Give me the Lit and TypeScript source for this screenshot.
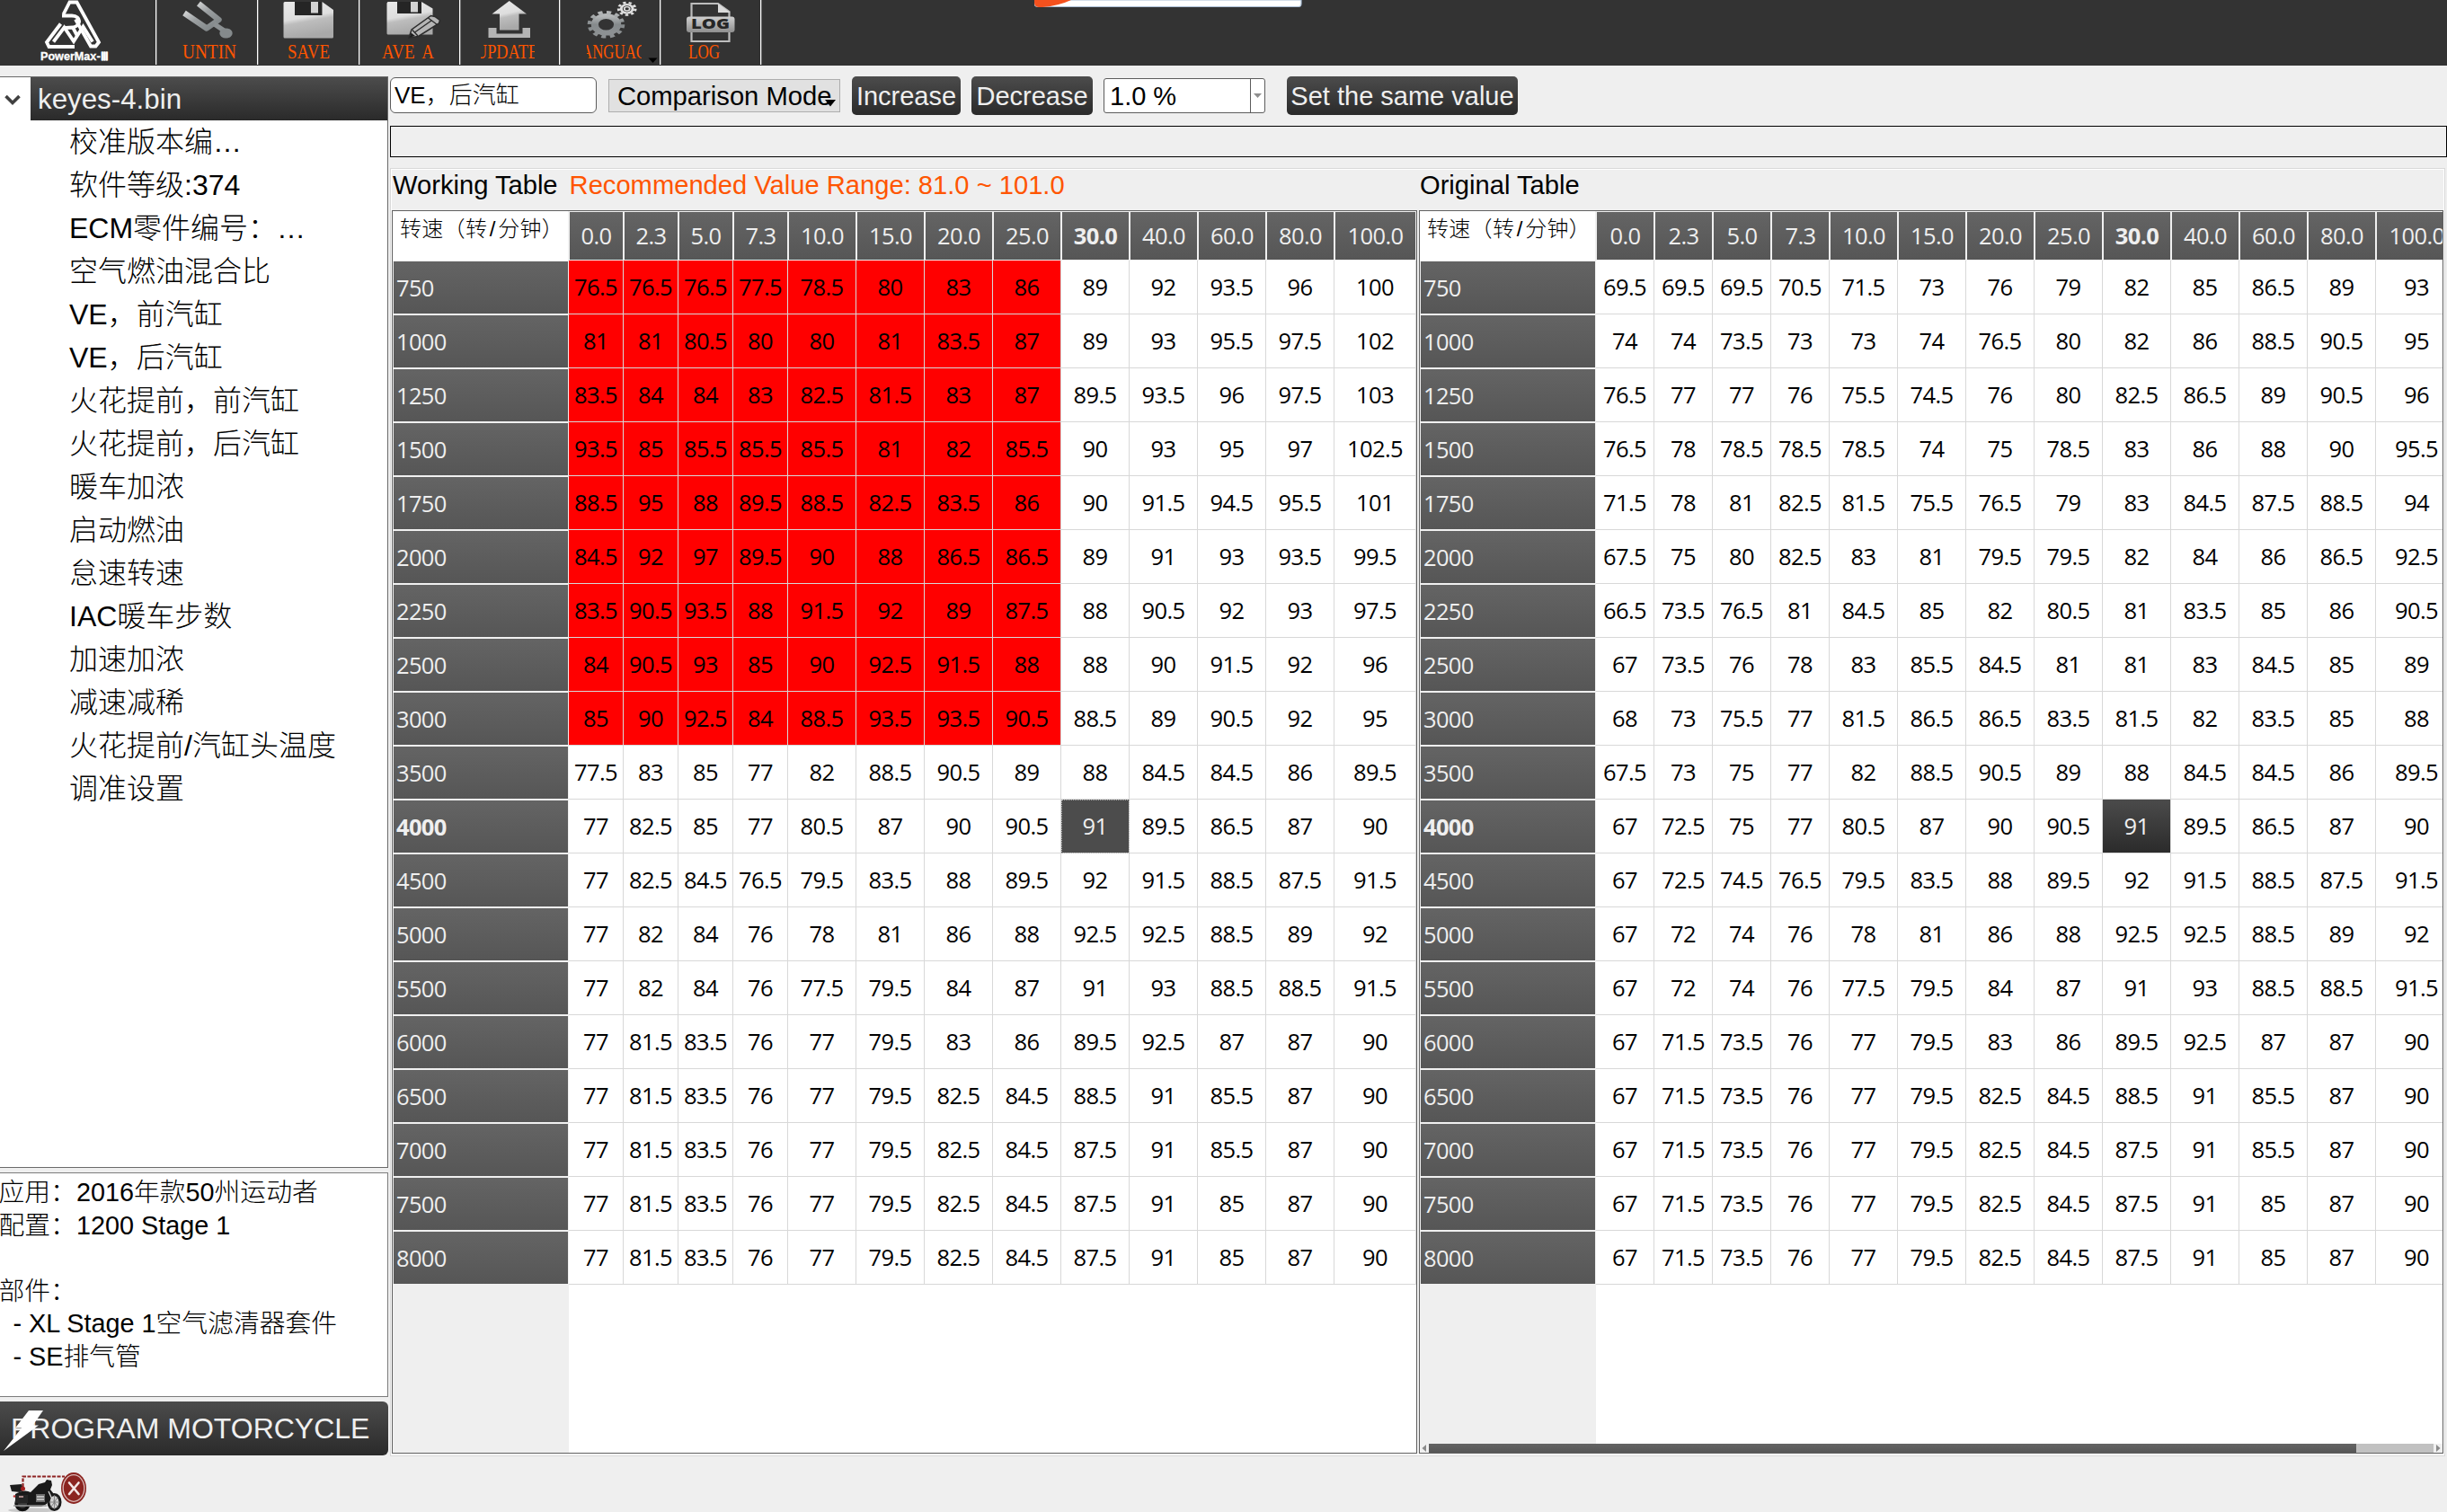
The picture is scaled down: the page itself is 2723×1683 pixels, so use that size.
import { LitElement, html, svg, css } from "lit";
import { customElement, property } from "lit/decorators.js";
import { classMap } from "lit/directives/class-map.js";

const LOADS = ["0.0", "2.3", "5.0", "7.3", "10.0", "15.0", "20.0", "25.0", "30.0", "40.0", "60.0", "80.0", "100.0"];
const SPEEDS = [750, 1000, 1250, 1500, 1750, 2000, 2250, 2500, 3000, 3500, 4000, 4500, 5000, 5500, 6000, 6500, 7000, 7500, 8000];

const parse = (text: string): string[][] =>
  text.trim().split("\n").map((line) => line.trim().split(/\s+/));

const WORKING = parse(`
76.5 76.5 76.5 77.5 78.5 80 83 86 89 92 93.5 96 100
81 81 80.5 80 80 81 83.5 87 89 93 95.5 97.5 102
83.5 84 84 83 82.5 81.5 83 87 89.5 93.5 96 97.5 103
93.5 85 85.5 85.5 85.5 81 82 85.5 90 93 95 97 102.5
88.5 95 88 89.5 88.5 82.5 83.5 86 90 91.5 94.5 95.5 101
84.5 92 97 89.5 90 88 86.5 86.5 89 91 93 93.5 99.5
83.5 90.5 93.5 88 91.5 92 89 87.5 88 90.5 92 93 97.5
84 90.5 93 85 90 92.5 91.5 88 88 90 91.5 92 96
85 90 92.5 84 88.5 93.5 93.5 90.5 88.5 89 90.5 92 95
77.5 83 85 77 82 88.5 90.5 89 88 84.5 84.5 86 89.5
77 82.5 85 77 80.5 87 90 90.5 91 89.5 86.5 87 90
77 82.5 84.5 76.5 79.5 83.5 88 89.5 92 91.5 88.5 87.5 91.5
77 82 84 76 78 81 86 88 92.5 92.5 88.5 89 92
77 82 84 76 77.5 79.5 84 87 91 93 88.5 88.5 91.5
77 81.5 83.5 76 77 79.5 83 86 89.5 92.5 87 87 90
77 81.5 83.5 76 77 79.5 82.5 84.5 88.5 91 85.5 87 90
77 81.5 83.5 76 77 79.5 82.5 84.5 87.5 91 85.5 87 90
77 81.5 83.5 76 77 79.5 82.5 84.5 87.5 91 85 87 90
77 81.5 83.5 76 77 79.5 82.5 84.5 87.5 91 85 87 90`);

const ORIGINAL = parse(`
69.5 69.5 69.5 70.5 71.5 73 76 79 82 85 86.5 89 93
74 74 73.5 73 73 74 76.5 80 82 86 88.5 90.5 95
76.5 77 77 76 75.5 74.5 76 80 82.5 86.5 89 90.5 96
76.5 78 78.5 78.5 78.5 74 75 78.5 83 86 88 90 95.5
71.5 78 81 82.5 81.5 75.5 76.5 79 83 84.5 87.5 88.5 94
67.5 75 80 82.5 83 81 79.5 79.5 82 84 86 86.5 92.5
66.5 73.5 76.5 81 84.5 85 82 80.5 81 83.5 85 86 90.5
67 73.5 76 78 83 85.5 84.5 81 81 83 84.5 85 89
68 73 75.5 77 81.5 86.5 86.5 83.5 81.5 82 83.5 85 88
67.5 73 75 77 82 88.5 90.5 89 88 84.5 84.5 86 89.5
67 72.5 75 77 80.5 87 90 90.5 91 89.5 86.5 87 90
67 72.5 74.5 76.5 79.5 83.5 88 89.5 92 91.5 88.5 87.5 91.5
67 72 74 76 78 81 86 88 92.5 92.5 88.5 89 92
67 72 74 76 77.5 79.5 84 87 91 93 88.5 88.5 91.5
67 71.5 73.5 76 77 79.5 83 86 89.5 92.5 87 87 90
67 71.5 73.5 76 77 79.5 82.5 84.5 88.5 91 85.5 87 90
67 71.5 73.5 76 77 79.5 82.5 84.5 87.5 91 85.5 87 90
67 71.5 73.5 76 77 79.5 82.5 84.5 87.5 91 85 87 90
67 71.5 73.5 76 77 79.5 82.5 84.5 87.5 91 85 87 90`);

const TREE = [
  "校准版本编…", "软件等级:374", "ECM零件编号：…", "空气燃油混合比", "VE，前汽缸", "VE，后汽缸",
  "火花提前，前汽缸", "火花提前，后汽缸", "暖车加浓", "启动燃油", "怠速转速", "IAC暖车步数",
  "加速加浓", "减速减稀", "火花提前/汽缸头温度", "调准设置",
];

@customElement("ve-table")
class VeTable extends LitElement {
  @property({ attribute: false }) rows: string[][] = [];
  @property({ type: Number }) narrow = 61;
  @property({ type: Boolean }) marked = false;
  @property({ type: Boolean }) scroller = false;

  static styles = css`
    :host { display: flex; flex-direction: column; box-sizing: border-box; height: 1384px; border: 1px solid #606060;
      background: #fff; overflow: hidden; font: 25.5px/1 "Open Sans", "Noto Sans", sans-serif; letter-spacing: -0.65px; }
    .grid { flex: 1; min-height: 0; display: grid; align-content: start; overflow: hidden; position: relative;
      background: linear-gradient(#efefef, #efefef) 0 0 / 196px 100% no-repeat; }
    .corner { box-sizing: border-box; background: #fff; border-right: 1px solid #efefef; padding: 7px 0 0 8px;
      font: 300 24px/26px "Liberation Sans", "Noto Sans CJK SC", sans-serif; letter-spacing: 0.3px; white-space: nowrap;
      text-spacing-trim: space-all; }
    .slash { display: inline-block; width: 12px; text-align: center; }
    .head, .side { box-sizing: border-box; border: 1px solid #f0f0f0; color: #efefef; background: linear-gradient(#646464, #565656) padding-box; }
    .head { display: flex; align-items: center; justify-content: center; }
    .side { display: flex; align-items: center; padding: 2px 0 0 3px; }
    .cell { box-sizing: border-box; display: flex; align-items: center; justify-content: center; color: #000;
      border-right: 1px solid #d8d8d8; border-bottom: 1px solid #d8d8d8; }
    .red { background: #f00; }
    .current { font-weight: 700; }
    .picked { color: #efefef; background: linear-gradient(#4b4b4b, #2b2b2b); }
    .picked.soft { background: #4c4c4c; outline: 1px dotted #b4b4b4; outline-offset: -1px; }
    .bar { flex: none; height: 10px; display: flex; align-items: stretch; background: #f0f0f0; }
    .bar svg { width: 10px; height: 10px; }
    .track { flex: 1; background: #c1c1c1; }
    .thumb { width: 1032px; height: 10px; background: linear-gradient(#646464, #565656); }
  `;

  render() {
    const n = this.narrow;
    const columns = `196px repeat(4, ${n}px) repeat(8, 76px) 91px`;
    return html`
      <div class="grid" style="grid-template-columns:${columns};grid-template-rows:55px repeat(19, 60px)">
        <div class="corner">转速（转<span class="slash">/</span>分钟）</div>
        ${LOADS.map((l) => html`<div class=${classMap({ head: true, current: l === "30.0" })}>${l}</div>`)}
        ${this.rows.map((row, r) => html`
          <div class=${classMap({ side: true, current: r === 10 })}>${SPEEDS[r]}</div>
          ${row.map((v, c) => html`<div class=${classMap({
            cell: true,
            red: this.marked && r < 9 && c < 8,
            picked: r === 10 && c === 8,
            soft: this.marked,
          })}>${v}</div>`)}`)}
      </div>
      ${this.scroller ? html`<div class="bar">
        <svg viewBox="0 0 10 10"><path d="M7 1v8L2.500 5z" fill="#8a8a8a"/></svg>
        <div class="track"><div class="thumb"></div></div>
        <svg viewBox="0 0 10 10"><path d="M3 1v8L7.500 5z" fill="#8a8a8a"/></svg>
      </div>` : ""}`;
  }
}

const tools = [
  { x: 173, w: 113, text: "UNTIN", tx: 203, len: 60, cx: 200, cw: 68, icon: svg`
      <path d="M221 4 243.500 22 230 31.500 205 14.500" fill="none" stroke="url(#m)" stroke-width="6.400" stroke-linejoin="round"/>
      <path d="M238 26.500 250 34.500" stroke="#8b9092" stroke-width="5.500"/>
      <ellipse cx="251.500" cy="37" rx="7.200" ry="5.500" fill="#858a8c"/>` },
  { x: 286, w: 113, text: "SAVE", tx: 320, len: 47, cx: 310, cw: 70, icon: svg`
      <path d="M317 2H328V17H358.500V2L371 11V41a1.500 1.500 0 0 1-1.500 1.500H317a1.500 1.500 0 0 1-1.500-1.500V3.500A1.500 1.500 0 0 1 317 2z" fill="url(#s)"/>
      <path d="M328 2h30v15h-30z" fill="#252525"/><path d="M346 2h8v12.500h-8z" fill="#d2d2d2"/>` },
  { x: 399, w: 112, text: "AVE A", tx: 425, len: 58, cx: 420, cw: 70, icon: svg`
      <path d="M431.500 2H442V15H469V2L481.500 9.500V38.500H431.500a1.500 1.500 0 0 1-1-1.500V3.500z" fill="url(#s)"/>
      <path d="M442 2h27v13h-27z" fill="#252525"/><path d="M457 2h8v11.500h-8z" fill="#d2d2d2"/>
      <path d="M455 42 458 33 479.500 17.500 484 18.500 489.500 22.500 488.500 26 465.500 40.500z" fill="#b5b5b5" stroke="#2c2c2c" stroke-width="1.500"/>
      <path d="M459 33.500 465 40M476.500 20 486.500 27.500M461.500 36 480 23" fill="none" stroke="#2c2c2c" stroke-width="1.400"/>
      <path d="M455.500 41.700 457.500 36.500 462 40z" fill="#1d1d1d"/>` },
  { x: 511, w: 111, text: "UPDATE", tx: 529, len: 70, cx: 535, cw: 60, icon: svg`
      <path d="M543.500 31H552.500V37.500H581.500V31H590V42H543.500z" fill="#b4b4b4"/>
      <path d="M566.700 1 586 15.500H577.500V33.500H556V15.500H547.500z" fill="url(#s)"/>` },
  { x: 622, w: 112, text: "ANGUAG", tx: 647, len: 73, cx: 653, cw: 61, icon: svg`
      <g transform="translate(674.500 27.300) scale(1.360 1)" fill="none" stroke="url(#g)">
        <circle r="9.300" stroke-width="6"/><circle r="13.400" stroke-width="3.800" stroke-dasharray="3.700 3.316"/></g>
      <g transform="translate(697.700 9.800) scale(1.360 1)" fill="none" stroke="#e0e0e0">
        <circle r="4.700" stroke-width="2.200"/><circle r="6.800" stroke-width="2.400" stroke-dasharray="2.500 2.247"/>
        <circle r="2.200" stroke-width="1.300"/></g>
      <path d="M721.500 64.500h10l-5 5.500z" fill="#000"/>` },
  { x: 734, w: 112, text: "LOG", tx: 766, len: 35, cx: 760, cw: 50, icon: svg`
      <path d="M769.500 46V4H799L811.500 13V46z" fill="none" stroke="#bdbdbd" stroke-width="2.200"/>
      <path d="M799 4V14H812.500z" fill="#dadada"/>
      <rect x="764" y="18.500" width="53.500" height="17.500" rx="3" fill="url(#b)"/>
      <text x="769" y="32.300" textLength="43" lengthAdjust="spacingAndGlyphs" class="logword">LOG</text>` },
];

const defs = svg`<defs>
  <linearGradient id="m" x1="0" y1="0" x2="1" y2="1"><stop offset="0" stop-color="#f0f0f0"/><stop offset=".5" stop-color="#9a9ea0"/><stop offset="1" stop-color="#7c8284"/></linearGradient>
  <linearGradient id="s" x1="0" y1="0" x2=".25" y2="1"><stop offset="0" stop-color="#e9e9e9"/><stop offset=".5" stop-color="#dedede"/><stop offset=".62" stop-color="#bdbdbd"/><stop offset="1" stop-color="#a9a9a9"/></linearGradient>
  <linearGradient id="g" x1="0" y1="0" x2="0" y2="1"><stop offset="0" stop-color="#b4b7b8"/><stop offset=".5" stop-color="#858a8c"/><stop offset="1" stop-color="#8d9193"/></linearGradient>
  <linearGradient id="b" x1="0" y1="0" x2="0" y2="1"><stop offset="0" stop-color="#d0d0d0"/><stop offset="1" stop-color="#8e8e8e"/></linearGradient>
</defs>`;

@customElement("app-root")
class AppRoot extends LitElement {
  static styles = css`
    :host { display: flex; flex-direction: column; width: 2723px; height: 1683px; overflow: hidden; background: #efefef; color: #000;
      font: 29px/36px "Liberation Sans", "Noto Sans CJK SC", sans-serif; position: relative; text-spacing-trim: space-all; }
    .toolbar { flex: none; height: 73px; background: #333; display: flex; }
    .toolbar > svg { display: block; height: 73px; flex: none; }
    .edge { fill: #fff; } .shade { fill: #6c6c6c; }
    .tooltext { fill: #ff5500; font: 23px "Liberation Serif", serif; word-spacing: 5px; }
    .logword { fill: #262626; font: 800 15px "Open Sans", sans-serif; }
    .brand { fill: #fff; font: 700 12px "Liberation Sans", sans-serif; stroke: #fff; stroke-width: .3px; }
    .notch { position: absolute; left: 1151px; top: 0; width: 298px; height: 9px; }
    .main { flex: none; height: 1548px; display: flex; }
    .left { width: 432px; flex: none; padding-top: 12px; display: flex; flex-direction: column; }
    .tree { box-sizing: border-box; height: 1215px; border: solid #6a6a6a; border-width: 1px 1px 1px 0; background: #fff; font-size: 32px; line-height: 48px; }
    .file { display: flex; height: 48px; }
    .twist { width: 34px; flex: none; }
    .name { flex: 1; background: linear-gradient(#4c4c4c, #2a2a2a); color: #efefef; padding-left: 8px; font-size: 31.300px; line-height: 50px; }
    .item { height: 48px; padding-left: 77px; white-space: nowrap; font-weight: 300; }
    .info { box-sizing: border-box; margin-top: 5px; height: 250px; border: solid #7c7c7c; border-width: 1px 1px 1px 0; background: #fff; padding-top: 3px;
      line-height: 36.500px; white-space: pre; font-weight: 300; font-size: 28.800px; }
    .lines { margin-left: -1.500px; }
    .program { margin-top: 5px; height: 60px; border-radius: 0 6px 6px 0; background: linear-gradient(#4c4c4c, #2a2a2a); color: #efefef;
      display: flex; align-items: center; font-size: 32px; padding-left: 12px; position: relative; white-space: nowrap; }
    .bolt { position: absolute; left: 0; top: 8px; width: 56px; height: 48px; }
    .right { flex: 1; min-width: 0; padding-left: 2px; display: flex; flex-direction: column; }
    .controls { height: 43px; margin-top: 12px; display: flex; align-items: center; white-space: nowrap; flex: none; }
    .field { box-sizing: border-box; width: 230px; height: 40px; margin-bottom: 1px; border: 1px solid #5c5c5c; border-radius: 6px; background: #fff; padding-left: 4px; font-size: 26px; line-height: 39px; font-weight: 300; }
    .combo { box-sizing: border-box; width: 258px; height: 37px; margin: 0 0 0 13px; border: 1px solid #adadad; background: #e1e1e1; padding-left: 9px; line-height: 36px; font-size: 29.200px; position: relative; }
    .combo svg { position: absolute; left: 240px; top: 22px; width: 12px; height: 8px; }
    .btn { box-sizing: border-box; height: 43px; border-radius: 5px; background: linear-gradient(#4c4c4c, #2a2a2a); color: #efefef; display: flex; align-items: center; justify-content: center; }
    .inc { width: 121px; margin-left: 13px; } .dec { width: 135px; margin-left: 12px; } .same { width: 257px; margin-left: 24px; }
    .spin { box-sizing: border-box; width: 180px; height: 39px; margin-left: 12px; border: 1px solid #5c5c5c; border-radius: 3px; background: #fff; display: flex; justify-content: space-between; padding-left: 6px; line-height: 39px; }
    .drop { width: 15px; border-left: 1px solid #5c5c5c; display: flex; align-items: center; justify-content: center; }
    .drop svg { width: 9px; height: 5px; }
    .strip { box-sizing: border-box; height: 35px; margin-top: 12px; border: 1px solid #000; flex: none; }
    .frame { box-sizing: border-box; margin-top: 12px; height: 1434px; width: 2287px; flex: none; border: 1px solid #d9d9d9; box-shadow: inset 0 1px #fff, inset 1px 0 #fff, inset -1px 0 #fff, inset 0 -2px #fff;
      padding: 1px 0 0 1px; display: flex; gap: 2px; }
    .pane { display: flex; flex-direction: column; }
    .work { width: 1141px; } .orig { width: 1140px; }
    .title { height: 45px; line-height: 34px; font-size: 29.150px; padding-left: 1px; white-space: nowrap; display: flex; gap: 13px; flex: none; }
    .range { color: #ff5500; }
    .status { flex: 1; padding: 17px 0 0 8px; }
    .status svg { display: block; width: 92px; height: 45px; }
  `;

  render() {
    return html`
      <div class="toolbar">
        <svg width="173" viewBox="0 0 173 73">
          <g fill="none" stroke="#fff" stroke-width="3.800">
            <path d="M70.500 16 77.500 2.500H85.500L110 47 106.500 51.500H101L84 21.500"/>
            <path d="M69 17.500H80C91 18 90.500 28.500 81 30.500L73 31M81 30.500 86 40"/>
            <path d="M67.500 26.500 52 47 54.500 52H83"/>
            <path d="M59.500 46.500 71.500 30.500 82 46 92.500 29.500 103 46.500"/>
          </g>
          <text class="brand" x="45" y="67" textLength="75" lengthAdjust="spacingAndGlyphs">PowerMax-Ⅲ</text>
        </svg>
        ${tools.map((t) => html`<svg width=${t.w} viewBox="${t.x} 0 ${t.w} 73">
          ${defs}
          <rect class="edge" x=${t.x} y="0" width="1" height="72"></rect><rect class="shade" x=${t.x + 1} y="0" width="1" height="72"></rect>
          ${t.icon}
          <svg x=${t.cx} y="40" width=${t.cw} height="33" viewBox="${t.cx} 40 ${t.cw} 33" overflow="hidden">
            <text class="tooltext" x=${t.tx} y="65" textLength=${t.len} lengthAdjust="spacingAndGlyphs">${t.text}</text>
          </svg>
        </svg>`)}
        <svg width="4" viewBox="846 0 4 73"><rect class="edge" x="846" y="0" width="1" height="72"></rect><rect class="shade" x="847" y="0" width="1" height="72"></rect></svg>
      </div>
      <svg class="notch" viewBox="0 0 298 9">
        <path d="M0 0V4Q0 7.500 5 7.500H294Q297 7.500 297 4V0z" fill="#fff" stroke="#a9bdd4" stroke-width="1.200"/>
        <path d="M0 0H41Q27 6.500 9 8H5Q0 7.500 0 3z" fill="#f4511e"/>
      </svg>
      <div class="main">
        <div class="left">
          <div class="tree">
            <div class="file">
              <svg class="twist" viewBox="0 0 34 48"><path d="M6.500 21 14 28.500 21.500 21" fill="none" stroke="#404040" stroke-width="3.600"/></svg>
              <div class="name">keyes-4.bin</div>
            </div>
            ${TREE.map((t) => html`<div class="item">${t}</div>`)}
          </div>
          <div class="info"><div class="lines">${"应用：2016年款50州运动者\n配置：1200 Stage 1\n\n部件：\n  - XL Stage 1空气滤清器套件\n  - SE排气管"}</div></div>
          <div class="program">
            <svg class="bolt" viewBox="0 0 56 48"><path d="M32 2H48L36.500 18.500H43L4 47 24 21.500H17z" fill="#fff"/></svg>
            <span>PROGRAM MOTORCYCLE</span>
          </div>
        </div>
        <div class="right">
          <div class="controls">
            <div class="field">VE，后汽缸</div>
            <div class="combo">Comparison Mode<svg viewBox="0 0 12 8"><path d="M0 0h12L6 7.500z"/></svg></div>
            <div class="btn inc">Increase</div>
            <div class="btn dec">Decrease</div>
            <div class="spin"><span>1.0 %</span><div class="drop"><svg viewBox="0 0 9 5"><path d="M0 0h9L4.500 5z" fill="#8e8e8e"/></svg></div></div>
            <div class="btn same">Set the same value</div>
          </div>
          <div class="strip"></div>
          <div class="frame">
            <div class="pane work">
              <div class="title"><span>Working Table</span><span class="range">Recommended Value Range: 81.0 ~ 101.0</span></div>
              <ve-table .rows=${WORKING} .narrow=${61} .marked=${true}></ve-table>
            </div>
            <div class="pane orig">
              <div class="title"><span>Original Table</span></div>
              <ve-table .rows=${ORIGINAL} .narrow=${65} .scroller=${true}></ve-table>
            </div>
          </div>
        </div>
      </div>
      <div class="status">
        <svg viewBox="8 1638 92 45">
          <path d="M25.500 1655V1643.500H72" fill="none" stroke="#8e2323" stroke-width="2.200" stroke-dasharray="4 1.500"/>
          <ellipse cx="36" cy="1681" rx="27" ry="2.500" fill="#c9c9c9"/>
          <circle cx="25" cy="1673.500" r="7" fill="#3a3a3a" stroke="#111" stroke-width="3.500"/>
          <ellipse cx="60.500" cy="1672" rx="6.500" ry="8.500" fill="#cfcfcf" stroke="#1c1c1c" stroke-width="3"/>
          <path d="M60.500 1664v16M54.500 1672h12M56.500 1666l8 12M64.500 1666l-8 12" stroke="#777" stroke-width=".8"/>
          <path d="M11 1653 24 1652 26 1659 22 1661 13 1660z" fill="#1d1d1d"/>
          <path d="M17 1663Q27 1657 34 1661L43 1652 50 1650 52 1647 57 1648 58 1653 56 1658 60 1663 56 1666 52 1674 46 1677 33 1677 30 1672 17 1674z" fill="#1a1a1a"/>
          <path d="M40 1663h10v9H40z" fill="#6d6d6d"/><path d="M41 1666h8M41 1669h8M54 1660l5 11" stroke="#d8d8d8" stroke-width="1.300"/>
          <path d="M17 1664h14v9H17z" fill="#262626"/><path d="M21 1665h5v2h-5z" fill="#a88"/>
          <path d="M15 1676H52" stroke="#9a9a9a" stroke-width="1.500"/>
          <circle cx="25.500" cy="1657" r="2.500" fill="#a32020"/><circle cx="16" cy="1665.500" r="1.300" fill="#c03030"/>
          <ellipse cx="82" cy="1656.500" rx="14" ry="17.500" fill="#8b2420"/>
          <ellipse cx="82" cy="1656.500" rx="11.800" ry="14.800" fill="none" stroke="#d9b8b6" stroke-width="1.300"/>
          <path d="M77 1650.500 87.500 1663M87.500 1650.500 77 1663" stroke="#f3e6e6" stroke-width="2.600" stroke-linecap="round"/>
        </svg>
      </div>`;
  }
}
